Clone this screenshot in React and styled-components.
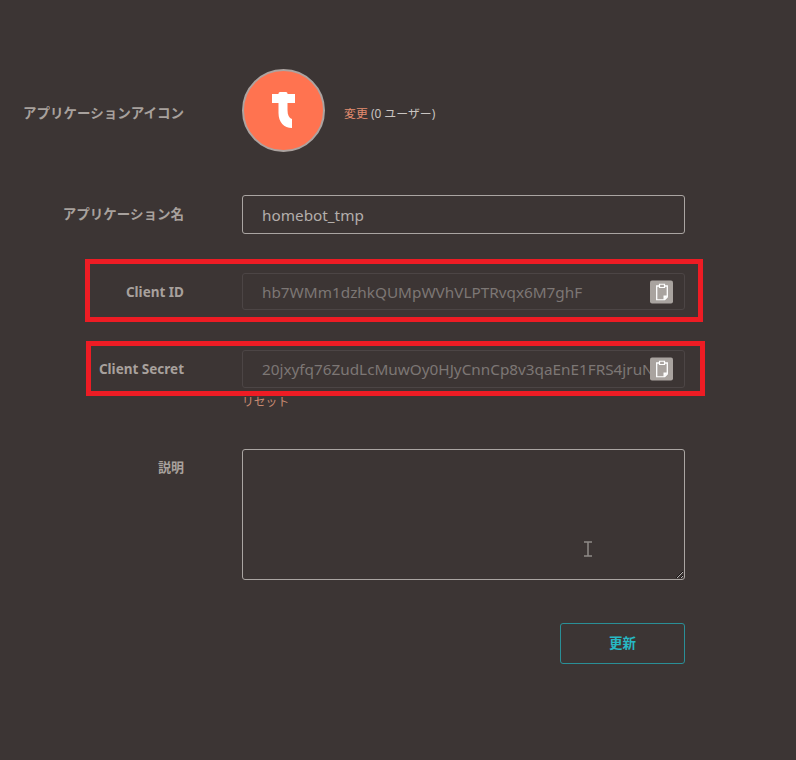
import styled, { createGlobalStyle } from "styled-components";

const ClipIcon = () => (
  <svg width="12" height="17" viewBox="0 0 12 17">
    <path d="M3 2.500H.7v13.800h7.800l2.800-2.800V2.500H9" fill="none" stroke="#fff" strokeWidth="1.300" />
    <path d="M3.500.7h5v3.300h-5z" fill="none" stroke="#fff" strokeWidth="1.200" />
    <path d="M7.500 16.500v-4.500h4.500z" fill="#fff" />
  </svg>
);

export default function App() {
  return (
    <>
      <GlobalStyle />
      <Page>
        <IconRow>
          <IconLabel>アプリケーションアイコン</IconLabel>
          <AppIcon>
            <svg width="23" height="36" viewBox="0 0 23 36">
              <path d="M6.500 1.500Q6.500 0 8 0h6q1.500 0 1.500 1.500V2H23v9h-7.500v7c0 5 1.500 8 4.500 9v9c-8 0-13.500-6-13.500-15V11H0V2h6.500z" fill="#fff" />
            </svg>
          </AppIcon>
          <IconMeta>
            <Link>変更</Link> (0 ユーザー)
          </IconMeta>
        </IconRow>

        <NameRow>
          <NameLabel>アプリケーション名</NameLabel>
          <Field>homebot_tmp</Field>
        </NameRow>

        <IdRow>
          <Label>Client ID</Label>
          <Field $dim>
            <FieldText>hb7WMm1dzhkQUMpWVhVLPTRvqx6M7ghF</FieldText>
            <CopyButton><ClipIcon /></CopyButton>
          </Field>
          <RedBox $left={-157} $right={-18} $top={-14} $bottom={-12} />
        </IdRow>

        <SecretRow>
          <Label>Client Secret</Label>
          <Field $dim>
            <FieldText>20jxyfq76ZudLcMuwOy0HJyCnnCp8v3qaEnE1FRS4jruN</FieldText>
            <CopyButton><ClipIcon /></CopyButton>
          </Field>
          <RedBox $left={-156} $right={-20} $top={-9} $bottom={-8} />
        </SecretRow>

        <ResetRow>
          <ResetLink>リセット</ResetLink>
        </ResetRow>

        <DescRow>
          <DescLabel>説明</DescLabel>
          <TextBox>
            <Description />
            <Cursor width="10" height="16" viewBox="0 0 10 16">
              <path d="M1 1h8M5 1v14M1 15h8" stroke="#8f8a87" strokeWidth="1.500" fill="none" />
            </Cursor>
          </TextBox>
        </DescRow>

        <Actions>
          <SubmitButton>更新</SubmitButton>
        </Actions>
      </Page>
    </>
  );
}

const GlobalStyle = createGlobalStyle`
  html, body {
    margin: 0;
    background: #3c3534;
  }
  body {
    font-family: "Noto Sans", "Noto Sans CJK JP", sans-serif;
  }
`;
const Page = styled.div`
  width: 796px;
  height: 760px;
  padding-top: 69px;
  box-sizing: border-box;
  overflow: hidden;
`;
const Row = styled.div`
  position: relative;
  display: grid;
  grid-template-columns: 184px 443px;
  column-gap: 58px;
  align-items: center;
`;
const IconRow = styled(Row)`
  grid-template-columns: 184px 83px auto;
  height: 83px;
  justify-content: start;
`;
const NameRow = styled(Row)`
  margin-top: 43px;
  height: 39px;
`;
const IdRow = styled(Row)`
  margin-top: 39px;
  height: 37px;
`;
const SecretRow = styled(Row)`
  margin-top: 40px;
  height: 38px;
`;
const ResetRow = styled.div`
  margin: 4px 0 0 242px;
  font-size: 11.800px;
  line-height: 17px;
  padding-top: 1px;
`;
const DescRow = styled(Row)`
  margin-top: 39px;
  align-items: start;
`;
const Label = styled.div`
  text-align: right;
  font-size: 13.500px;
  font-weight: 700;
  color: #a8a19d;
  white-space: nowrap;
`;
const IconLabel = styled(Label)`
  padding-top: 2px;
`;
const NameLabel = styled(Label)`
  padding-bottom: 3px;
`;
const DescLabel = styled(Label)`
  padding-top: 8px;
  font-size: 13px;
`;
const AppIcon = styled.div`
  width: 83px;
  height: 83px;
  box-sizing: border-box;
  display: flex;
  align-items: center;
  justify-content: center;
  border: 2px solid #aca3a0;
  border-radius: 50%;
  background: #ff7350;
  padding-bottom: 2px;
`;
const IconMeta = styled.div`
  font-size: 11.900px;
  color: #c9c4c1;
  white-space: pre;
  margin-left: -39px;
  padding-top: 3px;
`;
const Link = styled.span`
  color: #e58d70;
`;
const ResetLink = styled.span`
  color: #c98a72;
`;
const Field = styled.div`
  position: relative;
  display: flex;
  align-items: center;
  height: 100%;
  box-sizing: border-box;
  padding: 0 12px 0 19px;
  border: 1px solid ${(p) => (p.$dim ? "#4c4545" : "#aaa5a2")};
  border-radius: 3px;
  font-size: 15.300px;
  color: ${(p) => (p.$dim ? "#7d7775" : "#b3aeab")};
`;
const FieldText = styled.div`
  flex: 1;
  min-width: 0;
  white-space: nowrap;
`;
const CopyButton = styled.div`
  position: absolute;
  right: 11px;
  top: 50%;
  transform: translateY(-50%);
  width: 23px;
  height: 23px;
  display: flex;
  align-items: center;
  justify-content: center;
  border-radius: 2px;
  background: #a9a39f;
`;
const RedBox = styled.div`
  position: absolute;
  left: ${(p) => 242 + p.$left}px;
  width: ${(p) => 443 - p.$left - p.$right}px;
  top: ${(p) => p.$top}px;
  bottom: ${(p) => p.$bottom}px;
  border: 5px solid #ed1c24;
  box-sizing: border-box;
  pointer-events: none;
`;
const TextBox = styled.div`
  position: relative;
  height: 131px;
`;
const Description = styled.textarea`
  display: block;
  width: 100%;
  height: 100%;
  box-sizing: border-box;
  border: 1px solid #aaa5a2;
  border-radius: 3px;
  background: transparent;
  outline: none;
`;
const Cursor = styled.svg`
  position: absolute;
  left: 341px;
  top: 92px;
`;
const Actions = styled.div`
  display: flex;
  justify-content: flex-end;
  width: 685px;
  margin-top: 43px;
`;
const SubmitButton = styled.button`
  width: 125px;
  height: 41px;
  padding: 0 0 3px;
  border: 1.500px solid #2a8f97;
  border-radius: 3px;
  background: transparent;
  color: #27b8c4;
  font-family: inherit;
  font-size: 13.500px;
  font-weight: 700;
`;
